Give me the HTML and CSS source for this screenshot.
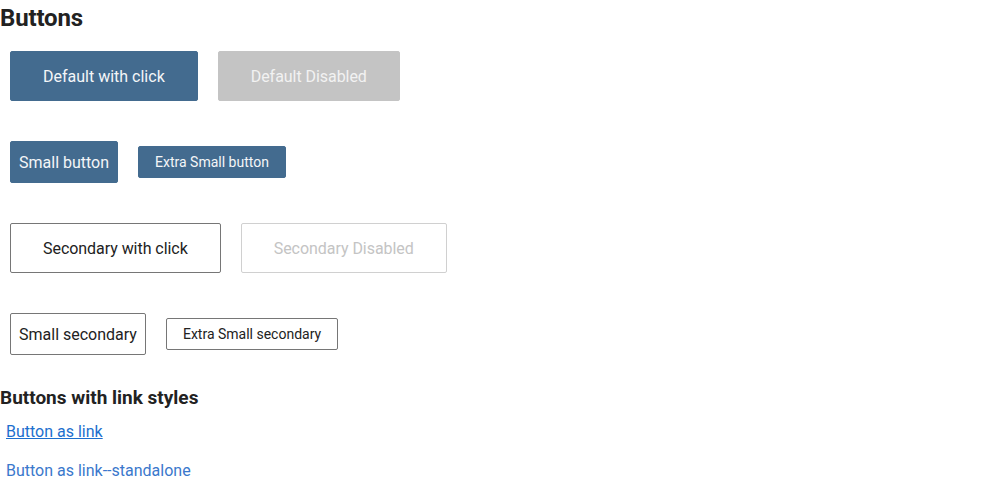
FILE: index.html
```html
<!DOCTYPE html>
<html>
<head>
<meta charset="utf-8">
<link rel="stylesheet" href="styles.css">
</head>
<body>
<h1 class="title">Buttons</h1>
<div class="row row-first">
  <button class="btn btn-primary">Default with click</button>
  <button class="btn btn-primary-disabled btn-tight">Default Disabled</button>
</div>
<div class="row">
  <button class="btn btn-primary btn-sm">Small button</button>
  <button class="btn btn-primary btn-xs">Extra Small button</button>
</div>
<div class="row">
  <button class="btn btn-secondary btn-tight">Secondary with click</button>
  <button class="btn btn-secondary-disabled btn-tight">Secondary Disabled</button>
</div>
<div class="row">
  <button class="btn btn-secondary btn-sm">Small secondary</button>
  <button class="btn btn-secondary btn-xs">Extra Small secondary</button>
</div>
<h2 class="subtitle">Buttons with link styles</h2>
<div class="links">
  <a class="link link-underline" href="#">Button as link</a>
  <a class="link link-standalone" href="#">Button as link--standalone</a>
</div>
</body>
</html>
```
FILE: styles.css
```css
html, body {
  margin: 0;
  padding: 0;
  background: #fff;
  font-family: Roboto, "Liberation Sans", sans-serif;
  color: #222;
}
.title {
  font-size: 24px;
  font-weight: 700;
  line-height: 28px;
  margin: 4px 0 0 0;
  color: #222;
  letter-spacing: -0.15px;
}
.row {
  display: flex;
  align-items: center;
  gap: 20px;
  padding: 0 10px;
  margin-top: 40px;
}
.row-first {
  margin-top: 19px;
}
.btn {
  font-family: Roboto, "Liberation Sans", sans-serif;
  font-size: 16px;
  height: 50px;
  padding: 0 32px;
  border: 1px solid transparent;
  border-radius: 2px;
  box-sizing: border-box;
  cursor: pointer;
}
.btn-tight {
  letter-spacing: -0.05px;
}
.btn-primary {
  background: #436b8f;
  border-color: #436b8f;
  color: #f4f6f8;
}
.btn-primary-disabled {
  background: #c4c4c4;
  border-color: #c4c4c4;
  color: #f2f2f2;
}
.btn-secondary {
  background: #fff;
  border-color: #767676;
  color: #222;
}
.btn-secondary-disabled {
  background: #fff;
  border-color: #d0d0d0;
  color: #c4c4c4;
}
.btn-sm {
  height: 42px;
  padding: 0 8px;
}
.btn-xs {
  height: 32px;
  padding: 0 16px;
  font-size: 14px;
}
.subtitle {
  font-size: 19px;
  font-weight: 700;
  line-height: 22px;
  margin: 32px 0 0 0;
  color: #222;
}
.links {
  display: flex;
  flex-direction: column;
  align-items: flex-start;
  gap: 17px;
  margin-top: 12px;
}
.link {
  font-size: 16px;
  line-height: 22px;
  padding: 0 6px;
}
.link-underline {
  text-decoration: underline;
  color: #1d6fce;
}
.link-standalone {
  text-decoration: none;
  color: #3a78cc;
}
```
